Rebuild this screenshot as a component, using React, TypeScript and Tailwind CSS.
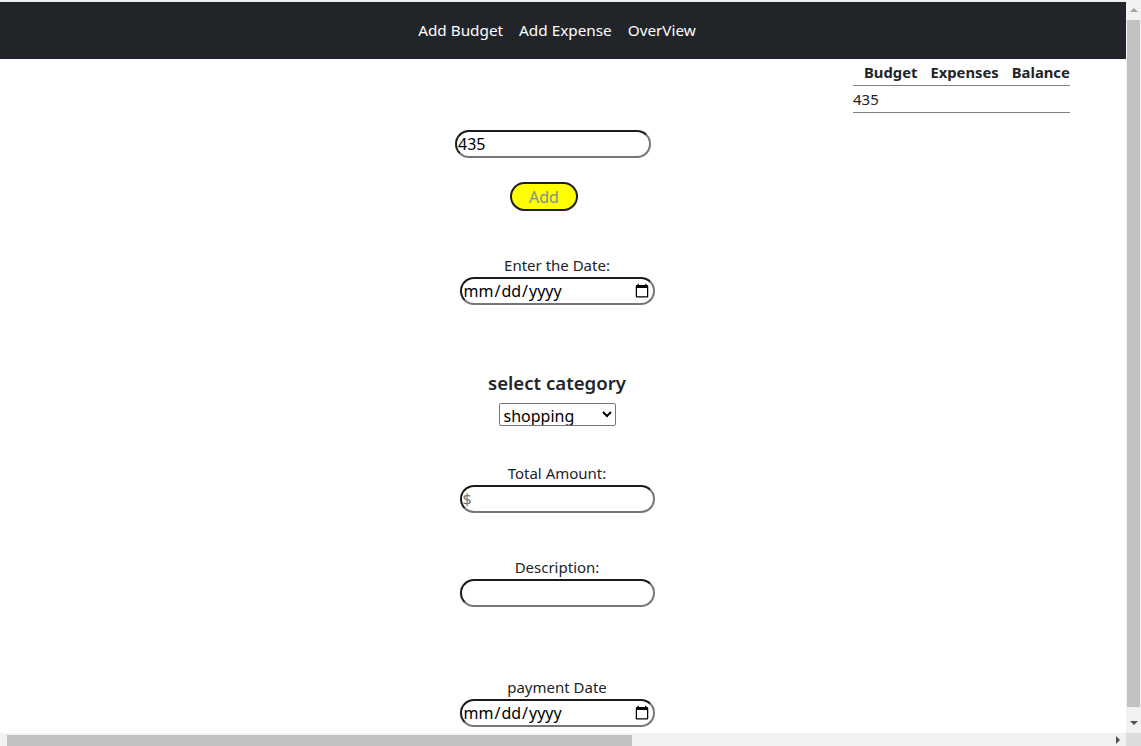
import { useState } from 'react';

const FONT = "font-['Noto_Sans','Open_Sans',sans-serif]";
const pill = 'h-[28px] rounded-full border-2 border-t-[#1b1b1b] border-l-[#1b1b1b] border-r-[#767676] border-b-[#767676] bg-white px-px text-[16px] text-black outline-none';

function DateField() {
  return <input type="date" className={`${pill} w-[195px] text-[14.6px] ${FONT}`} />;
}

export default function App() {
  const [budget, setBudget] = useState('435');
  const [category, setCategory] = useState('shopping');

  return (
    <div className={`relative h-[746px] w-[1141px] overflow-hidden bg-white text-[#212529] ${FONT}`}>
      <div className="w-[1126px]">
        <div className="h-[2px] bg-[#eeeeee]" />
        <nav className="flex h-[57px] items-center justify-center gap-4 bg-[#212529] pr-[12px] text-[15.3px] text-white">
          <a href="#">Add Budget</a>
          <a href="#">Add Expense</a>
          <a href="#">OverView</a>
        </nav>

        <div className="flex items-start">
          <form className="flex w-[853px] flex-col items-center pl-[261px] text-[15px]" onSubmit={(e) => e.preventDefault()}>
            <input value={budget} onChange={(e) => setBudget(e.target.value)} className={`${pill} ml-[-8px] mt-[71px] w-[196px]`} />
            <button className="ml-[-26px] mt-[24px] h-[29px] w-[68px] rounded-full border-2 border-[#1f1f1f] bg-[#ffff00] text-[16px] leading-none text-[#7f9488]">Add</button>

            <label className="mt-[42px] leading-[24px]">Enter the Date:</label>
            <DateField />

            <h3 className="mt-[65px] text-[18.6px] font-semibold leading-[26px]">select category</h3>
            <select value={category} onChange={(e) => setCategory(e.target.value)} className="mt-[7px] h-[23px] w-[117px] rounded-[2px] border border-[#767676] bg-white text-[16px] text-black">
              <option value="shopping">shopping</option>
              <option value="food">food</option>
              <option value="travel">travel</option>
              <option value="bills">bills</option>
            </select>

            <label className="mt-[35px] leading-[24px]">Total Amount:</label>
            <input placeholder="$" className={`${pill} w-[195px] placeholder:text-[#757575]`} />

            <label className="mt-[42px] leading-[24px]">Description:</label>
            <input className={`${pill} w-[195px]`} />

            <label className="mt-[68px] leading-[24px]">payment Date</label>
            <DateField />
          </form>

          <div className="w-[217px] text-[15px]">
            <div className="flex h-[27px] items-center gap-[13px] border-b border-[#808080] pl-[11px] text-[14.8px] font-bold">
              <span>Budget</span>
              <span>Expenses</span>
              <span>Balance</span>
            </div>
            <div className="flex h-[27px] items-center border-b border-[#808080]">{budget}</div>
          </div>
        </div>
      </div>

      {/* vertical scrollbar */}
      <div className="absolute right-0 top-0 flex h-[733px] w-[15px] flex-col items-center bg-[#f1f1f1]">
        <div className="mt-[8px] h-0 w-0 border-x-[4px] border-b-[4px] border-x-transparent border-b-[#a3a3a3]" />
        <div className="mt-[8px] h-[687px] w-[13px] bg-[#c1c1c1]" />
        <div className="mt-[14px] h-0 w-0 border-x-[4px] border-t-[4px] border-x-transparent border-t-[#505050]" />
      </div>
      {/* horizontal scrollbar */}
      <div className="absolute bottom-0 left-0 flex h-[13px] w-[1126px] items-center bg-[#f1f1f1]">
        <div className="ml-[7px] mt-[2px] h-[11px] w-[625px] bg-[#c1c1c1]" />
        <div className="ml-auto mr-[6px] h-0 w-0 border-y-[4px] border-l-[4px] border-y-transparent border-l-[#505050]" />
      </div>
      <div className="absolute bottom-0 right-0 h-[13px] w-[15px] bg-[#dcdcdc]" />
    </div>
  );
}
